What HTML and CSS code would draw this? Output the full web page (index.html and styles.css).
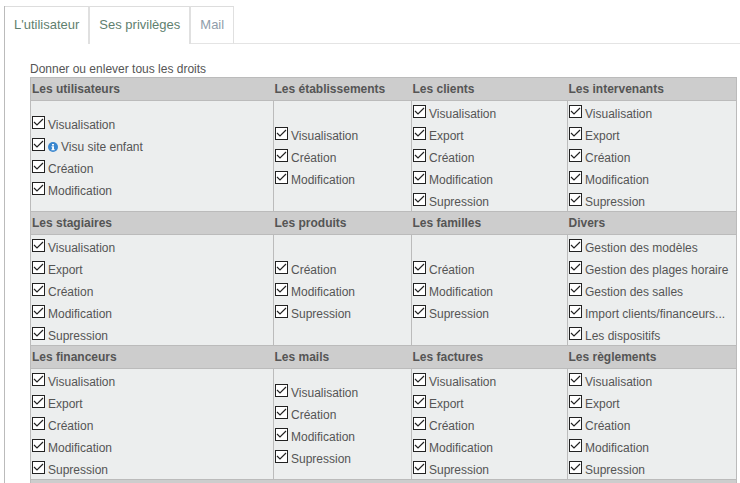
FILE: index.html
```html
<!DOCTYPE html>
<html lang="fr">
<head>
    <meta charset="UTF-8">
    <meta name="viewport" content="width=device-width, initial-scale=1.0">
    <title>Ses privilèges</title>
    <link rel="stylesheet" href="styles.css">
</head>
<body>
    <div class="panel">
        <nav class="tabs">
            <a class="tab" href="#utilisateur">L'utilisateur</a>
            <a class="tab" href="#privileges">Ses privilèges</a>
            <a class="tab tab-mail" href="#mail">Mail</a>
        </nav>

        <div class="content" id="privileges">
            <p class="intro">Donner ou enlever tous les droits</p>

            <table class="rights">
                <colgroup>
                    <col>
                    <col class="col-small">
                    <col class="col-medium">
                    <col class="col-large">
                </colgroup>
                <tr>
                    <th>Les utilisateurs</th>
                    <th>Les établissements</th>
                    <th>Les clients</th>
                    <th>Les intervenants</th>
                </tr>
                <tr>
                    <td>
                        <label><input type="checkbox" checked> Visualisation</label>
                        <label><input type="checkbox" checked> <svg class="info" viewBox="0 0 10 10"><circle cx="5" cy="5" r="5" fill="#3a87cf"/><path d="M4 2h2v1.5H4zM3.5 4.2H6v3h.7v1H3.4v-1h.7v-2h-.6z" fill="#fff"/></svg> Visu site enfant</label>
                        <label><input type="checkbox" checked> Création</label>
                        <label><input type="checkbox" checked> Modification</label>
                    </td>
                    <td>
                        <label><input type="checkbox" checked> Visualisation</label>
                        <label><input type="checkbox" checked> Création</label>
                        <label><input type="checkbox" checked> Modification</label>
                    </td>
                    <td>
                        <label><input type="checkbox" checked> Visualisation</label>
                        <label><input type="checkbox" checked> Export</label>
                        <label><input type="checkbox" checked> Création</label>
                        <label><input type="checkbox" checked> Modification</label>
                        <label><input type="checkbox" checked> Supression</label>
                    </td>
                    <td>
                        <label><input type="checkbox" checked> Visualisation</label>
                        <label><input type="checkbox" checked> Export</label>
                        <label><input type="checkbox" checked> Création</label>
                        <label><input type="checkbox" checked> Modification</label>
                        <label><input type="checkbox" checked> Supression</label>
                    </td>
                </tr>
                <tr>
                    <th>Les stagiaires</th>
                    <th>Les produits</th>
                    <th>Les familles</th>
                    <th>Divers</th>
                </tr>
                <tr>
                    <td>
                        <label><input type="checkbox" checked> Visualisation</label>
                        <label><input type="checkbox" checked> Export</label>
                        <label><input type="checkbox" checked> Création</label>
                        <label><input type="checkbox" checked> Modification</label>
                        <label><input type="checkbox" checked> Supression</label>
                    </td>
                    <td>
                        <label><input type="checkbox" checked> Création</label>
                        <label><input type="checkbox" checked> Modification</label>
                        <label><input type="checkbox" checked> Supression</label>
                    </td>
                    <td>
                        <label><input type="checkbox" checked> Création</label>
                        <label><input type="checkbox" checked> Modification</label>
                        <label><input type="checkbox" checked> Supression</label>
                    </td>
                    <td>
                        <label><input type="checkbox" checked> Gestion des modèles</label>
                        <label><input type="checkbox" checked> Gestion des plages horaire</label>
                        <label><input type="checkbox" checked> Gestion des salles</label>
                        <label><input type="checkbox" checked> Import clients/financeurs...</label>
                        <label><input type="checkbox" checked> Les dispositifs</label>
                    </td>
                </tr>
                <tr>
                    <th>Les financeurs</th>
                    <th>Les mails</th>
                    <th>Les factures</th>
                    <th>Les règlements</th>
                </tr>
                <tr>
                    <td>
                        <label><input type="checkbox" checked> Visualisation</label>
                        <label><input type="checkbox" checked> Export</label>
                        <label><input type="checkbox" checked> Création</label>
                        <label><input type="checkbox" checked> Modification</label>
                        <label><input type="checkbox" checked> Supression</label>
                    </td>
                    <td>
                        <label><input type="checkbox" checked> Visualisation</label>
                        <label><input type="checkbox" checked> Création</label>
                        <label><input type="checkbox" checked> Modification</label>
                        <label><input type="checkbox" checked> Supression</label>
                    </td>
                    <td>
                        <label><input type="checkbox" checked> Visualisation</label>
                        <label><input type="checkbox" checked> Export</label>
                        <label><input type="checkbox" checked> Création</label>
                        <label><input type="checkbox" checked> Modification</label>
                        <label><input type="checkbox" checked> Supression</label>
                    </td>
                    <td>
                        <label><input type="checkbox" checked> Visualisation</label>
                        <label><input type="checkbox" checked> Export</label>
                        <label><input type="checkbox" checked> Création</label>
                        <label><input type="checkbox" checked> Modification</label>
                        <label><input type="checkbox" checked> Supression</label>
                    </td>
                </tr>
                <tr>
                    <th colspan="4"></th>
                </tr>
            </table>
        </div>
    </div>
</body>
</html>
```
FILE: styles.css
```css
body {
    margin: 0;
    font-family: Arial, "Liberation Sans", sans-serif;
    font-size: 12px;
    color: #555;
    background: #fff;
}
.panel {
    margin: 6px 0 0 4px;
    border-left: 1px solid #bbb;
}
.tabs {
    display: flex;
    height: 38px;
}
/* the rule under the tabs only starts after the open ones */
.tabs::after {
    content: "";
    flex: 1;
    border-bottom: 1px solid #e4e4e4;
}
.tab {
    padding: 0 9px;
    border-top: 1px solid #ddd;
    border-right: 2px solid #e0e0e0;
    font-size: 13px;
    line-height: 36px;
    color: #5f7f6f;
    text-decoration: none;
}
.tab-mail {
    border-right-width: 1px;
    border-bottom: 1px solid #e4e4e4;
    color: #8f9daa;
}
.content {
    padding: 17px 3px 0 25px;
}
.intro {
    margin: 0;
    line-height: 16px;
}
.rights {
    width: 100%;
    table-layout: fixed;
    border-collapse: collapse;
    border: 1px solid #bbb;
}
.col-small {
    width: 138px;
}
.col-medium {
    width: 156px;
}
.col-large {
    width: 169px;
}
.rights th {
    height: 22px;
    padding: 0 1px;
    border-top: 1px solid #bbb;
    border-bottom: 1px solid #bbb;
    background: #cdcdcd;
    line-height: 22px;
    text-align: left;
}
.rights td {
    padding: 0 1px;
    border: 1px solid #bbb;
    background: #eceeee;
    vertical-align: middle;
    white-space: nowrap;
}
.rights label {
    display: flex;
    align-items: center;
    gap: 3px;
    height: 22px;
    padding-top: 3px;
    box-sizing: border-box;
}
.rights input {
    appearance: none;
    flex: none;
    width: 13px;
    height: 13px;
    margin: 0 0 4px;
    border: 1px solid #222;
    background: #fff url("data:image/svg+xml,%3Csvg xmlns='http://www.w3.org/2000/svg' viewBox='0 0 11 11'%3E%3Cpath d='M1 5l3 3 6-6' fill='none' stroke='%23222' stroke-width='1.2'/%3E%3C/svg%3E");
}
.info {
    flex: none;
    width: 10px;
    height: 10px;
}
```
